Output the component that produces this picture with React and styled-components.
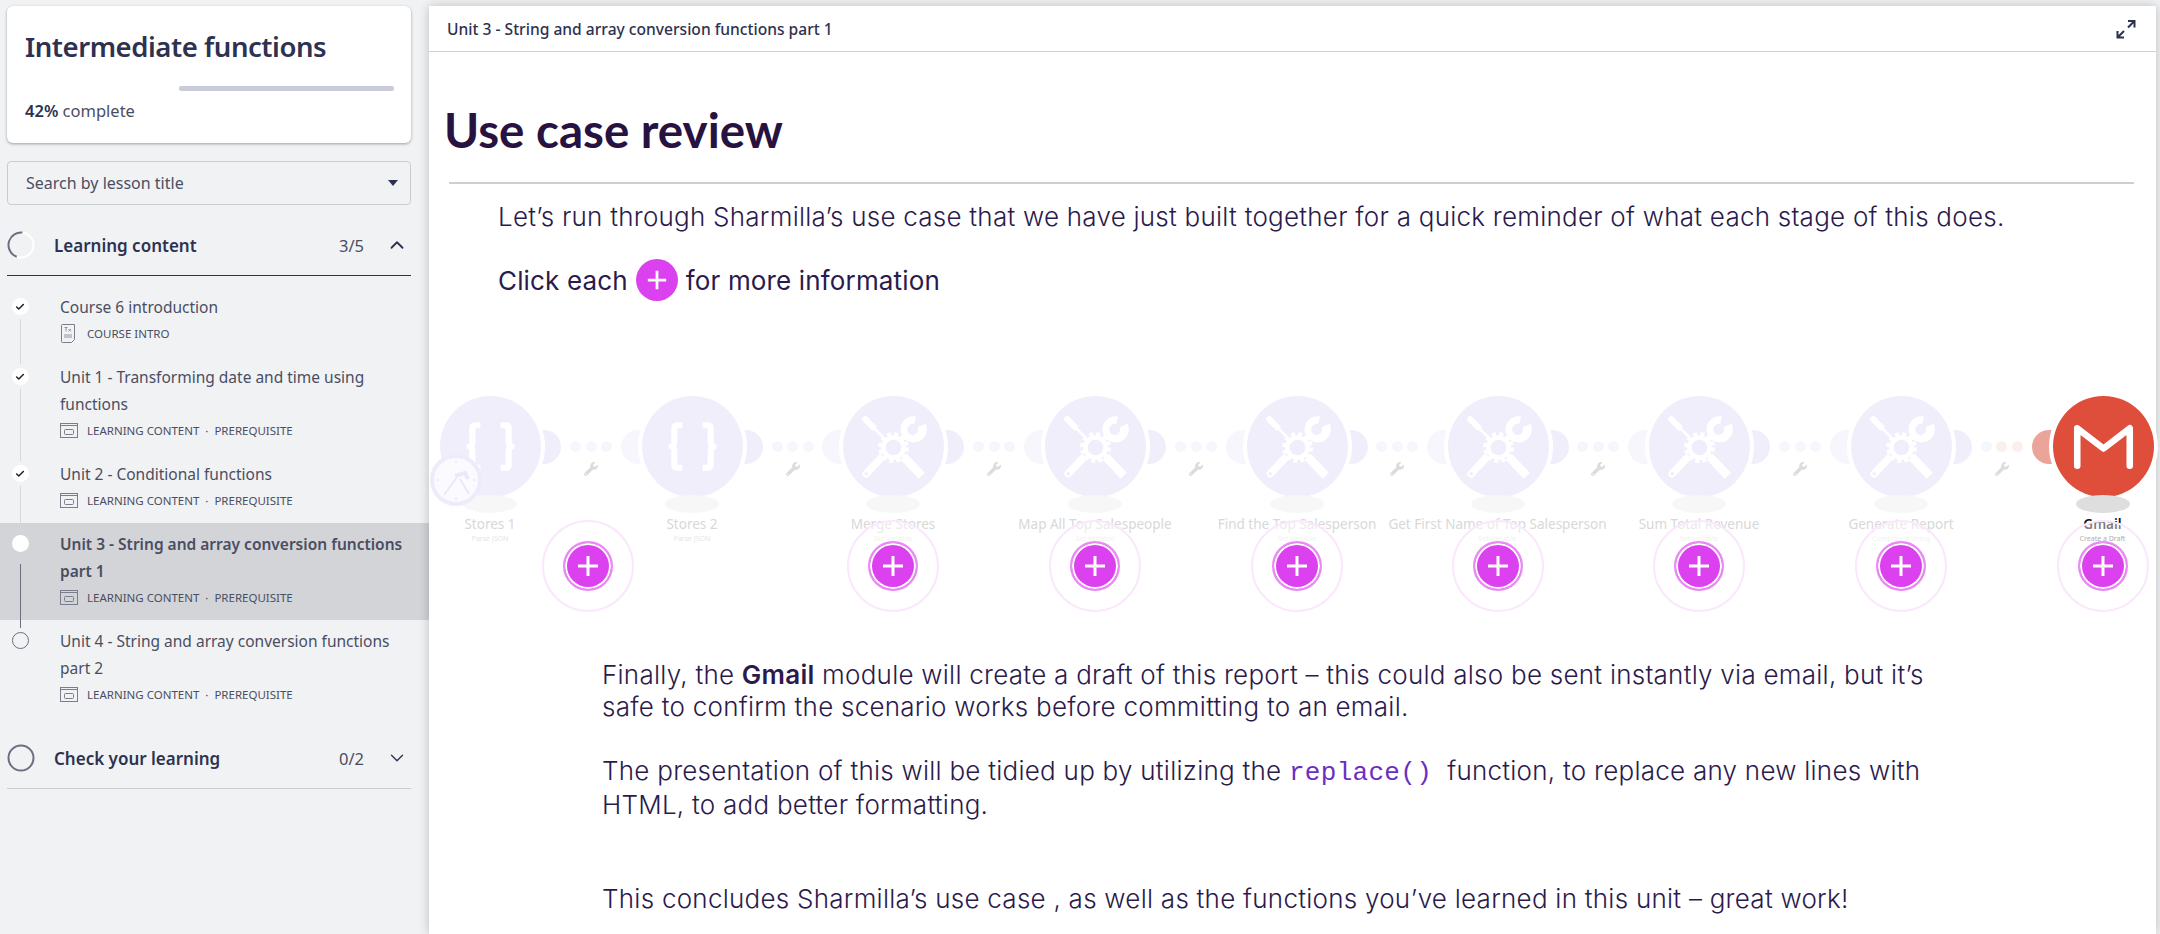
import React from 'react'
import styled, { createGlobalStyle } from 'styled-components'
import { Check, ChevronUp, ChevronDown } from 'lucide-react'
import { FaWrench } from 'react-icons/fa'

const sans = `'Noto Sans', 'Open Sans', sans-serif`
const inter = `Inter, 'Noto Sans', sans-serif`

const Global = createGlobalStyle`
  html, body { margin: 0; padding: 0; height: 100%; overflow: hidden; background: #f1f2f4; }
  * { box-sizing: border-box; }
`

const Page = styled.div`
  display: flex;
  width: 2160px;
  height: 934px;
  overflow: hidden;
  background: #f1f2f4;
  font-family: ${sans};
  color: #2d3250;
`

/* sidebar */
const Sidebar = styled.aside`
  width: 429px;
  flex: none;
  padding-top: 6px;
`
const CourseCard = styled.div`
  width: 404px;
  height: 137px;
  margin-left: 7px;
  padding: 24px 18px 0;
  background: #fff;
  border-radius: 6px;
  box-shadow: 0 1px 3px rgba(0, 0, 0, 0.35);
`
const CourseTitle = styled.h1`
  margin: 0;
  font-size: 27.5px;
  line-height: 34px;
  font-weight: 600;
  letter-spacing: -0.45px;
  color: #2d3250;
`
const Progress = styled.div`
  width: 215px;
  height: 5px;
  margin: 22px 0 0 154px;
  background: #c9ccd8;
  border-radius: 2px;
`
const Complete = styled.div`
  margin-top: 9px;
  font-size: 16.5px;
  line-height: 22px;
  color: #4a4e62;
  b { font-weight: 600; color: #2d3250; }
`
const SearchSelect = styled.div`
  display: flex;
  align-items: center;
  justify-content: space-between;
  width: 404px;
  height: 44px;
  margin: 18px 0 0 7px;
  padding: 0 12px 0 18px;
  border: 1px solid #c9ccd2;
  border-radius: 4px;
  font-size: 16px;
  color: #4a4e62;
`
const Caret = styled.span`
  width: 0;
  height: 0;
  border-left: 5px solid transparent;
  border-right: 5px solid transparent;
  border-top: 6px solid #2d3250;
`
const SectionHead = styled.div`
  display: flex;
  align-items: center;
  width: 404px;
  height: 62px;
  margin: ${p => p.$top}px 0 0 7px;
  padding-top: 1px;
  border-bottom: 1px solid ${p => (p.$open ? '#2d3250' : '#c9ccd2')};
`
const SectionTitle = styled.div`
  flex: 1;
  margin-left: 19px;
  font-size: 17px;
  font-weight: 600;
  color: #2d3250;
`
const SectionCount = styled.div`
  margin-right: 22px;
  font-size: 16.5px;
  color: #4a4e62;
`
const Chevron = styled.span`
  display: flex;
  margin-right: 3px;
  color: #2d3250;
`
const Lessons = styled.div`
  margin: 10px 0;
`
const Lesson = styled.div`
  display: grid;
  grid-template-columns: 40px 1fr;
  column-gap: 20px;
  background: ${p => (p.$active ? '#d3d4d8' : 'transparent')};
`
const Rail = styled.div`
  display: flex;
  flex-direction: column;
  align-items: center;
  padding-top: 12px;
`
const Dot = styled.span`
  display: flex;
  align-items: center;
  justify-content: center;
  flex: none;
  width: 17px;
  height: 17px;
  border-radius: 50%;
  background: ${p => (p.$hollow ? 'transparent' : '#fff')};
  border: ${p => (p.$hollow ? '1px solid #6b6e80' : 'none')};
  color: #1d1d24;
`
const RailLine = styled.span`
  flex: 1;
  width: 1px;
  margin-top: ${p => (p.$active ? 12 : 4)}px;
  margin-bottom: -8px;
  background: ${p => (p.$active ? '#6b6e80' : '#d8d9dd')};
`
const LessonBody = styled.div`
  padding: 8px 10px 11px 0;
`
const LessonTitle = styled.div`
  font-size: 15.5px;
  line-height: 27px;
  font-weight: ${p => (p.$active ? 600 : 400)};
  color: #4a4e62;
`
const LessonMeta = styled.div`
  display: flex;
  align-items: center;
  gap: 9px;
  height: 24px;
  font-size: 11.5px;
  color: #4a4e62;
`
const MetaText = styled.span`
  white-space: pre;
`

/* main panel */
const Main = styled.main`
  flex: none;
  width: 1727px;
  height: 928px;
  margin-top: 6px;
  background: #fff;
  box-shadow: 0 0 10px rgba(0, 0, 0, 0.22);
`
const MainHeader = styled.header`
  display: flex;
  align-items: center;
  justify-content: space-between;
  height: 46px;
  padding: 0 20px 0 18px;
  border-bottom: 1px solid #cfd0d4;
  font-size: 15.6px;
  font-weight: 500;
  color: #2d3250;
`
const Title = styled.h2`
  margin: 50px 0 0 15px;
  font-family: Lato, sans-serif;
  font-size: 47.5px;
  line-height: 56px;
  font-weight: 700;
  color: #28123f;
`
const Rule = styled.hr`
  width: 1685px;
  height: 2px;
  margin: 24px 0 0 20px;
  border: 0;
  background: #cfcfcf;
`
const Lead = styled.p`
  margin: 17px 0 0 69px;
  font-family: ${inter};
  font-size: 26px;
  line-height: 32px;
  font-weight: 300;
  letter-spacing: 0.24px;
  color: #2b1a4c;
`
const ClickRow = styled.div`
  display: flex;
  align-items: center;
  gap: 8px;
  height: 42px;
  margin: 26px 0 0 69px;
  font-family: ${inter};
  font-size: 26px;
  font-weight: 400;
  letter-spacing: 0.15px;
  color: #2b1a4c;
`
const InlinePlus = styled.span`
  display: flex;
  align-items: center;
  justify-content: center;
  width: 42px;
  height: 42px;
  border-radius: 50%;
  background: #db41ef;
`
const Canvas = styled.div`
  position: relative;
  height: 275px;
  margin-top: 83px;
`
const Copy = styled.div`
  width: 1370px;
  margin-left: 173px;
  font-family: ${inter};
  font-size: 26px;
  line-height: 32px;
  font-weight: 300;
  letter-spacing: 0.25px;
  color: #2b1a4c;
`
const CopyPara = styled.p`
  margin: ${p => p.$top}px 0 0;
  b { font-weight: 600; }
`
const Code = styled.code`
  font-family: 'Liberation Mono', monospace;
  font-size: 26px;
  letter-spacing: 0.3px;
  color: #6b2ec4;
`

/* diagram nodes sit on their own canvas */
const Node = styled.div`
  position: absolute;
  left: ${p => p.$x - 50}px;
  top: 12px;
  width: 101px;
  height: 101px;
  border-radius: 50%;
  background: ${p => p.$color};
  box-shadow: 0 0 0 4px #fff;
`
const Nub = styled.div`
  position: absolute;
  top: 46px;
  left: ${p => (p.$side === 'right' ? p.$x + 45 : p.$x - 71)}px;
  width: 26px;
  height: 34px;
  background: ${p => p.$color};
  border-radius: ${p => (p.$side === 'right' ? '0 17px 17px 0' : '17px 0 0 17px')};
`
const LinkDot = styled.div`
  position: absolute;
  top: 57px;
  left: ${p => p.$x - 5.5}px;
  width: 11px;
  height: 11px;
  border-radius: 50%;
  background: ${p => p.$color};
`
const LinkWrench = styled.div`
  position: absolute;
  top: 78px;
  left: ${p => p.$x - 7}px;
  display: flex;
  color: #dcdcdc;
`
const NodeShadow = styled.div`
  position: absolute;
  top: 111px;
  left: ${p => p.$x - 27}px;
  width: 54px;
  height: 18px;
  border-radius: 50%;
  background: ${p => (p.$on ? '#dedede' : '#f7f7f7')};
`
const NodeLabel = styled.div`
  position: absolute;
  top: 131px;
  left: ${p => p.$x - 110}px;
  width: 220px;
  text-align: center;
  font-size: 13.5px;
  line-height: 18px;
  font-weight: ${p => (p.$on ? 600 : 400)};
  color: ${p => (p.$on ? '#111' : '#d8d8d8')};
  white-space: nowrap;
`
const NodeSub = styled.div`
  position: absolute;
  top: 150px;
  left: ${p => p.$x - 100}px;
  width: 200px;
  text-align: center;
  font-size: 7px;
  line-height: 10px;
  color: ${p => (p.$on ? '#666' : '#e6e6e6')};
`
const HotRing = styled.div`
  position: absolute;
  top: 136px;
  left: ${p => p.$x - 46}px;
  width: 92px;
  height: 92px;
  border-radius: 50%;
  border: 2px solid #fbe8fd;
  background: rgba(255, 255, 255, 0.45);
`
const HotButton = styled.div`
  position: absolute;
  top: 157px;
  left: ${p => p.$x - 25}px;
  display: flex;
  align-items: center;
  justify-content: center;
  width: 50px;
  height: 50px;
  border-radius: 50%;
  background: #db41ef;
  border: 2px solid #e98af5;
  box-shadow: inset 0 0 0 2px #fff;
`
const ClockBadge = styled.div`
  position: absolute;
  top: 69px;
  left: 0;
  display: flex;
`

const Plus = ({ size = 24 }) => (
  <svg width={size} height={size} viewBox="0 0 24 24">
    <path d="M12 2v20M2 12h20" stroke="#fff" strokeWidth="3" />
  </svg>
)

const ExpandIcon = () => (
  <svg width="20" height="20" viewBox="0 0 20 20" fill="none" stroke="#2d3250" strokeWidth="2">
    <path d="M12 2h6.500v6.500M18 2.500l-6 6" />
    <path d="M1.500 12v6.500H8M2 18l6-6" />
  </svg>
)

const ProgressRing = ({ partial }) => (
  <svg width="28" height="28" viewBox="0 0 28 28" fill="none">
    {partial ? (
      <>
        <circle cx="14" cy="14" r="12.500" stroke="#fff" strokeWidth="2" />
        <circle cx="14" cy="14" r="12.500" stroke="#6b6e80" strokeWidth="2" strokeDasharray="36 79" transform="rotate(110 14 14)" />
      </>
    ) : (
      <circle cx="14" cy="14" r="12.500" stroke="#6b6e80" strokeWidth="2" />
    )}
  </svg>
)

const WindowIcon = () => (
  <svg width="18" height="15" viewBox="0 0 18 15" fill="none" stroke="#7a7d8c" strokeWidth="1">
    <rect x="0.500" y="0.500" width="17" height="14" />
    <path d="M0.500 2.500h17" />
    <rect x="4.500" y="6.500" width="9" height="5" rx="1" />
  </svg>
)

const DocIcon = () => (
  <svg width="18" height="19" viewBox="0 0 18 19" fill="none" stroke="#7a7d8c" strokeWidth="1">
    <path d="M2.500 0.500h12v15l-3 3h-9a1 1 0 0 1-1-1v-16a1 1 0 0 1 1-1z" />
    <path d="M4.500 3.500h3M6 3.500v4M8.500 5l2.500 2.500M11 5l-2.500 2.500M4 11h8M4 13h8" strokeWidth="0.800" />
  </svg>
)

const ToolsIcon = ({ bg }) => (
  <svg width="101" height="101" viewBox="-50 -50 100 100">
    <g stroke="#fff" fill="none" strokeLinecap="round">
      <path d="M-28-27l8 8" strokeWidth="6" />
      <path d="M-20-19l10 10" strokeWidth="2.500" />
      <path d="M-27 27l14-15" strokeWidth="7.500" />
      <path d="M10 10l18 19" strokeWidth="8.500" strokeLinecap="butt" />
      <circle cx="0" cy="1" r="10" strokeWidth="4.500" />
      <circle cx="0" cy="1" r="13.500" strokeWidth="3.500" strokeDasharray="4 3.100" strokeLinecap="butt" />
      <path d="M8-7l6-5" strokeWidth="5" />
    </g>
    <circle cx="20" cy="-17" r="13" fill="#fff" />
    <circle cx="19" cy="-17" r="5.500" fill={bg} />
    <path d="M19-17L24-36L40-26z" fill={bg} />
    <circle cx="-27" cy="27" r="1.800" fill={bg} />
  </svg>
)

const BracesIcon = () => (
  <svg width="101" height="101" viewBox="-50 -50 100 100">
    <g stroke="#fff" strokeWidth="6" fill="none" strokeLinejoin="round">
      <path d="M-10-21h-5q-3 0-3 3v14q0 3-3 4q3 1 3 4v14q0 3 3 3h5" />
      <path d="M10-21h5q3 0 3 3v14q0 3 3 4q-3 1-3 4v14q0 3-3 3h-5" />
    </g>
  </svg>
)

const GmailIcon = () => (
  <svg width="101" height="101" viewBox="-50 -50 100 100">
    <path d="M-26 19V-18L0 2L26-18V19" stroke="#fff" strokeWidth="6.500" fill="none" strokeLinejoin="round" strokeLinecap="round" />
  </svg>
)

const ClockIcon = () => (
  <svg width="54" height="54" viewBox="0 0 54 54">
    <circle cx="27" cy="27" r="24" fill="#fbfaff" stroke="#efebfb" strokeWidth="4" />
    <g stroke="#ece8fa" fill="none">
      <path d="M31 26l9 15M28 24L15 42" strokeWidth="2" />
      <path d="M26 23l10-3 3 6" strokeWidth="4" />
      <path d="M27 7v3M27 44v3M7 27h3M44 27h3" strokeWidth="1.500" />
    </g>
  </svg>
)

const lessons = [
  { title: 'Course 6 introduction', meta: 'COURSE INTRO', icon: 'doc', done: true },
  { title: 'Unit 1 - Transforming date and time using functions', meta: 'LEARNING CONTENT  ·  PREREQUISITE', done: true },
  { title: 'Unit 2 - Conditional functions', meta: 'LEARNING CONTENT  ·  PREREQUISITE', done: true },
  { title: 'Unit 3 - String and array conversion functions part 1', meta: 'LEARNING CONTENT  ·  PREREQUISITE', active: true },
  { title: 'Unit 4 - String and array conversion functions part 2', meta: 'LEARNING CONTENT  ·  PREREQUISITE', hollow: true, last: true },
]

const lilac = '#f1eefc'
const nodes = [
  { x: 61, name: 'Stores 1', sub: 'Parse JSON', icon: 'braces', first: true },
  { x: 263, name: 'Stores 2', sub: 'Parse JSON', icon: 'braces' },
  { x: 464, name: 'Merge Stores', sub: 'Set variable', icon: 'tools' },
  { x: 666, name: 'Map All Top Salespeople', sub: 'Set variable', icon: 'tools' },
  { x: 868, name: 'Find the Top Salesperson', sub: 'Set variable', icon: 'tools' },
  { x: 1068.5, name: 'Get First Name of Top Salesperson', sub: 'Set variable', icon: 'tools' },
  { x: 1270, name: 'Sum Total Revenue', sub: 'Set variable', icon: 'tools' },
  { x: 1472, name: 'Generate Report', sub: 'Compose a string', icon: 'tools' },
  { x: 1673.5, name: 'Gmail', sub: 'Create a Draft', icon: 'gmail', on: true },
]
const hotspots = [159, 464, 666, 868, 1068.5, 1270, 1472, 1673.5]

const Diagram = () => (
  <Canvas>
    {nodes.map((n, i) => {
      const next = nodes[i + 1]
      const mid = next ? (n.x + next.x) / 2 : 0
      const pale = next && next.on ? ['#f7f6fd', '#fbefed', '#fbefed'] : ['#f7f6fd', '#f7f6fd', '#f7f6fd']
      return (
        <React.Fragment key={n.name}>
          {!n.first && <Nub $side="left" $x={n.x} $color={n.on ? '#eba499' : '#f7f6fd'} />}
          {next && <Nub $side="right" $x={n.x} $color={lilac} />}
          <Node $x={n.x} $color={n.on ? '#de4e3a' : lilac}>
            {n.icon === 'braces' && <BracesIcon />}
            {n.icon === 'tools' && <ToolsIcon bg={lilac} />}
            {n.icon === 'gmail' && <GmailIcon />}
          </Node>
          <NodeShadow $x={n.x} $on={n.on} />
          <NodeLabel $x={n.x} $on={n.on}>{n.name}</NodeLabel>
          <NodeSub $x={n.x} $on={n.on}>{n.sub}</NodeSub>
          {next && (
            <>
              <LinkDot $x={mid - 15.5} $color={pale[0]} />
              <LinkDot $x={mid} $color={pale[1]} />
              <LinkDot $x={mid + 15.5} $color={pale[2]} />
              <LinkWrench $x={mid}><FaWrench size={14} /></LinkWrench>
            </>
          )}
        </React.Fragment>
      )
    })}
    <ClockBadge><ClockIcon /></ClockBadge>
    {hotspots.map(x => (
      <React.Fragment key={x}>
        <HotRing $x={x} />
        <HotButton $x={x}><Plus size={24} /></HotButton>
      </React.Fragment>
    ))}
  </Canvas>
)

export default function App() {
  return (
    <Page>
      <Global />
      <Sidebar>
        <CourseCard>
          <CourseTitle>Intermediate functions</CourseTitle>
          <Progress />
          <Complete><b>42%</b> complete</Complete>
        </CourseCard>
        <SearchSelect>
          Search by lesson title
          <Caret />
        </SearchSelect>
        <SectionHead $open $top={9}>
          <ProgressRing partial />
          <SectionTitle>Learning content</SectionTitle>
          <SectionCount>3/5</SectionCount>
          <Chevron><ChevronUp size={22} strokeWidth={2} /></Chevron>
        </SectionHead>
        <Lessons>
          {lessons.map(l => (
            <Lesson key={l.title} $active={l.active}>
              <Rail>
                <Dot $hollow={l.hollow}>{l.done && <Check size={10} strokeWidth={3.5} />}</Dot>
                {!l.last && <RailLine $active={l.active} />}
              </Rail>
              <LessonBody>
                <LessonTitle $active={l.active}>{l.title}</LessonTitle>
                <LessonMeta>
                  {l.icon === 'doc' ? <DocIcon /> : <WindowIcon />}
                  <MetaText>{l.meta}</MetaText>
                </LessonMeta>
              </LessonBody>
            </Lesson>
          ))}
        </Lessons>
        <SectionHead $top={0}>
          <ProgressRing />
          <SectionTitle>Check your learning</SectionTitle>
          <SectionCount>0/2</SectionCount>
          <Chevron><ChevronDown size={22} strokeWidth={1.5} /></Chevron>
        </SectionHead>
      </Sidebar>
      <Main>
        <MainHeader>
          Unit 3 - String and array conversion functions part 1
          <ExpandIcon />
        </MainHeader>
        <Title>Use case review</Title>
        <Rule />
        <Lead>Let’s run through Sharmilla’s use case that we have just built together for a quick reminder of what each stage of this does.</Lead>
        <ClickRow>
          Click each
          <InlinePlus><Plus size={22} /></InlinePlus>
          for more information
        </ClickRow>
        <Diagram />
        <Copy>
          <CopyPara $top={0}>Finally, the <b>Gmail</b> module will create a draft of this report – this could also be sent instantly via email, but it’s safe to confirm the scenario works before committing to an email.</CopyPara>
          <CopyPara $top={32}>The presentation of this will be tidied up by utilizing the <Code>replace()</Code>&nbsp; function, to replace any new lines with HTML, to add better formatting.</CopyPara>
          <CopyPara $top={62}>This concludes Sharmilla’s use case , as well as the functions you’ve learned in this unit – great work!</CopyPara>
        </Copy>
      </Main>
    </Page>
  )
}
